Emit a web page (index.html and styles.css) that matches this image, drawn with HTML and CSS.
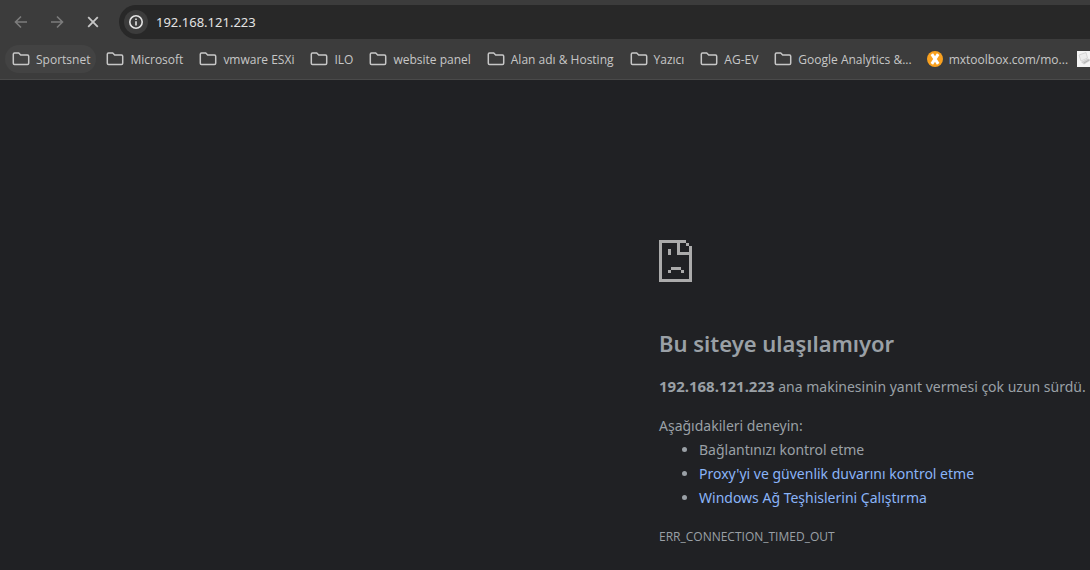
FILE: index.html
```html
<!DOCTYPE html>
<html lang="tr">
<head>
    <meta charset="UTF-8">
    <meta name="viewport" content="width=device-width, initial-scale=1.0">
    <title>192.168.121.223</title>
    <link rel="stylesheet" href="styles.css">
</head>
<body>
    <!-- Klasör simgesi -->
    <svg class="symbols" aria-hidden="true">
        <symbol id="folder" viewBox="0 0 18 16">
            <path d="M2.5 2H6.7L8.7 4H15.5Q16.7 4 16.7 5.2V12.3Q16.7 13.5 15.5 13.5H2.5Q1.3 13.5 1.3 12.3V3.2Q1.3 2 2.5 2Z" fill="none" stroke="#c7c7c7" stroke-width="1.5"/>
        </symbol>
    </svg>

    <header class="browser">
        <!-- Araç çubuğu -->
        <div class="toolbar">
            <button class="nav-btn" aria-label="Geri" disabled>
                <svg width="16" height="16" viewBox="0 0 16 16"><path d="M14 8H3M8 2.5L2.5 8L8 13.5"/></svg>
            </button>
            <button class="nav-btn" aria-label="İleri" disabled>
                <svg width="16" height="16" viewBox="0 0 16 16"><path d="M2 8H13M8 2.5L13.5 8L8 13.5"/></svg>
            </button>
            <button class="nav-btn stop" aria-label="Durdur">
                <svg width="16" height="16" viewBox="0 0 16 16"><path d="M3.2 3.2L12.8 12.8M12.8 3.2L3.2 12.8"/></svg>
            </button>
            <div class="address-bar">
                <button class="info-btn" aria-label="Site bilgileri">
                    <svg width="16" height="16" viewBox="0 0 16 16">
                        <circle cx="8" cy="8" r="6.2" fill="none" stroke="#e3e3e3" stroke-width="1.6"/>
                        <path d="M8 7.2V11.4M8 4.4V6" stroke="#e3e3e3" stroke-width="1.6"/>
                    </svg>
                </button>
                <input class="address" type="text" value="192.168.121.223" aria-label="Adres çubuğu">
            </div>
        </div>

        <!-- Yer işaretleri -->
        <nav class="bookmarks">
            <button class="bookmark active"><svg class="folder"><use href="#folder"/></svg>Sportsnet</button>
            <button class="bookmark"><svg class="folder"><use href="#folder"/></svg>Microsoft</button>
            <button class="bookmark"><svg class="folder"><use href="#folder"/></svg>vmware ESXi</button>
            <button class="bookmark"><svg class="folder"><use href="#folder"/></svg>ILO</button>
            <button class="bookmark"><svg class="folder"><use href="#folder"/></svg>website panel</button>
            <button class="bookmark"><svg class="folder"><use href="#folder"/></svg>Alan adı &amp; Hosting</button>
            <button class="bookmark"><svg class="folder"><use href="#folder"/></svg>Yazıcı</button>
            <button class="bookmark"><svg class="folder"><use href="#folder"/></svg>AG-EV</button>
            <button class="bookmark"><svg class="folder"><use href="#folder"/></svg>Google Analytics &amp;...</button>
            <a class="bookmark site" href="#">
                <svg class="favicon" viewBox="0 0 16 16">
                    <circle cx="8" cy="8" r="8" fill="#f9a11f"/>
                    <path d="M4.8 3.2L11.2 12.8M11.2 3.2L4.8 12.8" stroke="#fff" stroke-width="3"/>
                </svg>mxtoolbox.com/mo...</a>
            <a class="bookmark site" href="#" aria-label="Yer işareti">
                <svg class="favicon" viewBox="0 0 16 16">
                    <rect width="16" height="16" fill="#f4f4f4"/>
                    <path d="M2 4L9 1.5L10.5 7L4 10Z" fill="#ededed" stroke="#d6d6d6"/>
                    <path d="M4 11L11 7.5L14 9L7 13.5Z" fill="#d0d0d0"/>
                    <path d="M7 12L12 9" stroke="#b4b4b4"/>
                </svg></a>
        </nav>
    </header>

    <!-- Hata sayfası -->
    <main class="error-page">
        <svg class="error-icon" viewBox="0 0 33 42" shape-rendering="crispEdges" aria-hidden="true">
            <path d="M0 0H27V3H30V6H33V42H0ZM3 3V39H30V15H18V3ZM21 3V12H30V6H27V3Z" fill-rule="evenodd"/>
            <path d="M9 9H12V15H9ZM12 27H22V30H12ZM9 30H12V33H9ZM22 30H25V33H22Z"/>
        </svg>
        <h1>Bu siteye ulaşılamıyor</h1>
        <p><strong>192.168.121.223</strong> ana makinesinin yanıt vermesi çok uzun sürdü.</p>
        <div class="suggestions">
            <p>Aşağıdakileri deneyin:</p>
            <ul>
                <li>Bağlantınızı kontrol etme</li>
                <li><a href="#">Proxy'yi ve güvenlik duvarını kontrol etme</a></li>
                <li><a href="#">Windows Ağ Teşhislerini Çalıştırma</a></li>
            </ul>
        </div>
        <div class="error-code">ERR_CONNECTION_TIMED_OUT</div>
    </main>
</body>
</html>
```
FILE: styles.css
```css
/* Genel */
body {
    margin: 0;
    background-color: #202124;
    color: #9aa0a6;
    font-family: "Noto Sans", sans-serif;
    font-size: 14px;
    overflow-x: hidden;
}

button {
    border: none;
    background: none;
    padding: 0;
    font: inherit;
}

.symbols {
    display: none;
}

/* Tarayıcı üst kısmı */
.browser {
    background-color: #3c3c3c;
    border-bottom: 1px solid #4a4a4a;
    overflow: hidden;
}

.toolbar {
    display: flex;
    align-items: center;
    padding: 5px 0 0 3px;
}

.nav-btn {
    display: flex;
    align-items: center;
    justify-content: center;
    width: 36px;
    height: 34px;
}

.nav-btn path {
    fill: none;
    stroke: #7c7c7c;
    stroke-width: 1.6;
}

.nav-btn.stop path {
    stroke: #c7c7c7;
    stroke-width: 1.8;
}

.address-bar {
    flex: 1;
    display: flex;
    align-items: center;
    gap: 8px;
    height: 34px;
    margin-left: 8px;
    padding-left: 5px;
    background-color: #282828;
    border-radius: 17px 0 0 17px;
}

.info-btn {
    display: flex;
    align-items: center;
    justify-content: center;
    width: 24px;
    height: 24px;
    border-radius: 50%;
    background-color: #3c3c3c;
}

.address {
    flex: 1;
    padding: 0;
    border: none;
    outline: none;
    background: none;
    color: #e3e3e3;
    font-family: inherit;
    font-size: 13px;
}

/* Yer işaretleri çubuğu */
.bookmarks {
    display: flex;
    gap: 3px;
    padding: 6px 0 6px 5px;
}

.bookmark {
    display: flex;
    flex-shrink: 0;
    align-items: center;
    gap: 6px;
    height: 28px;
    padding: 0 6px 0 7px;
    border-radius: 14px;
    color: #c7c7c7;
    font-family: "Open Sans", sans-serif;
    font-size: 12px;
    text-decoration: none;
    white-space: nowrap;
}

.bookmark.active {
    background-color: #434343;
}

.bookmark.site {
    padding: 0 0 0 6px;
}

.folder {
    width: 18px;
    height: 16px;
}

.favicon {
    width: 16px;
    height: 16px;
}

/* Hata sayfası */
.error-page {
    box-sizing: border-box;
    max-width: 431px;
    margin-left: auto;
    padding-top: 160px;
    line-height: 24px;
}

.error-icon {
    display: block;
    width: 33px;
    height: 42px;
    fill: #ababab;
}

h1 {
    margin: 47px 0 16px;
    font-size: 22px;
    font-weight: 600;
    line-height: 29px;
}

p {
    margin: 0;
    white-space: nowrap;
}

strong {
    font-size: 15px;
}

.suggestions {
    margin-top: 15px;
}

ul {
    margin: 0;
    padding-left: 40px;
}

.error-page a {
    color: #8ab4f8;
    text-decoration: none;
}

.error-code {
    margin-top: 15px;
    font-family: "Open Sans", sans-serif;
    font-size: 12px;
}
```
